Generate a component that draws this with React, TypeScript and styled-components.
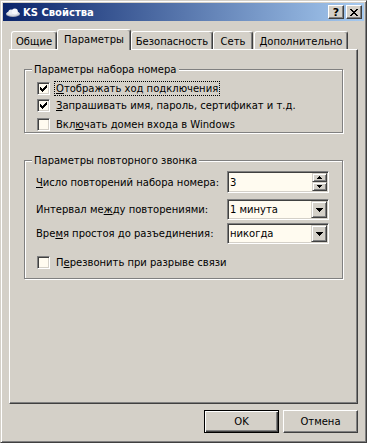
import React from 'react'
import styled, { createGlobalStyle } from 'styled-components'

const GlobalStyle = createGlobalStyle`
  html, body {
    margin: 0;
    padding: 0;
    background: #d4d0c8;
  }
  body {
    font-family: "DejaVu Sans", "Liberation Sans", sans-serif;
    font-size: 10px;
    line-height: 13px;
    color: #000;
  }
`

// small pixel drawings (check mark, arrows, close cross)
function Pixels({ rows, color = '#000' }: { rows: string[]; color?: string }) {
    const w = rows[0].length
    const h = rows.length
    const rects: React.ReactNode[] = []
    rows.forEach((row, y) => {
        row.split('').forEach((c, x) => {
            if (c === 'x') rects.push(<rect key={x + '-' + y} x={x} y={y} width={1} height={1} />)
        })
    })
    return (
        <svg width={w} height={h} viewBox={`0 0 ${w} ${h}`} shapeRendering='crispEdges' fill={color}>
            {rects}
        </svg>
    )
}

const CHECK = ['......x', '.....xx', 'x...xxx', 'xx.xxx.', 'xxxxx..', '.xxx...', '..x....']
const CROSS = ['xx....xx', '.xx..xx.', '..xxxx..', '...xx...', '..xxxx..', '.xx..xx.', 'xx....xx']
const DROP = ['xxxxxxx', '.xxxxx.', '..xxx..', '...x...']
const UP = ['..x..', '.xxx.', 'xxxxx']
const DOWN = ['xxxxx', '.xxx.', '..x..']

const Window = styled.div`
    box-sizing: border-box;
    width: 367px;
    height: 443px;
    padding: 2px;
    display: flex;
    flex-direction: column;
    background: #d4d0c8;
    border: 1px solid;
    border-color: #d4d0c8 #404040 #404040 #d4d0c8;
    box-shadow: inset 1px 1px 0 #fff, inset -1px -1px 0 #808080;
`

const TitleBar = styled.div`
    display: flex;
    align-items: center;
    height: 18px;
    padding: 0 2px;
    background: linear-gradient(to right, #0a246a, #a6caf0);
    color: #fff;
    font-weight: bold;
`

const TitleText = styled.span`
    flex: 1;
    margin-left: 2px;
    white-space: nowrap;
`

const TitleButton = styled.div<{ $gap?: number }>`
    box-sizing: border-box;
    width: 16px;
    height: 14px;
    margin-left: ${p => p.$gap ?? 0}px;
    display: flex;
    align-items: center;
    justify-content: center;
    background: #d4d0c8;
    border: 1px solid;
    border-color: #fff #404040 #404040 #fff;
    box-shadow: inset -1px -1px 0 #808080;
    color: #000;
    font-size: 11px;
    font-weight: bold;
`

const Body = styled.div`
    flex: 1;
    display: flex;
    flex-direction: column;
    padding: 8px 6px 0;
`

const TabStrip = styled.div`
    position: relative;
    z-index: 1;
    display: flex;
    align-items: flex-end;
    height: 20px;
    padding-left: 2px;
`

const Tab = styled.div<{ $active?: boolean; $w: number; $ml?: number }>`
    box-sizing: border-box;
    width: ${p => p.$w}px;
    height: ${p => (p.$active ? 21 : 18)}px;
    margin-bottom: ${p => (p.$active ? -1 : 0)}px;
    margin-left: ${p => p.$ml ?? 0}px;
    padding-top: 3px;
    text-align: center;
    white-space: nowrap;
    background: #d4d0c8;
    border: 1px solid;
    border-bottom: none;
    border-color: #fff #404040 #fff #fff;
    border-radius: 3px 3px 0 0;
    box-shadow: inset -1px 0 0 #808080;
`

const Panel = styled.div`
    box-sizing: border-box;
    height: 355px;
    padding: 0 14px;
    display: flex;
    flex-direction: column;
    border: 1px solid;
    border-color: #fff #404040 #404040 #fff;
    box-shadow: inset -1px -1px 0 #808080;
`

const Group = styled.div<{ $top: number; $h: number }>`
    position: relative;
    box-sizing: border-box;
    margin-top: ${p => p.$top}px;
    height: ${p => p.$h}px;
    padding-top: 10px;
    border: 1px solid #808080;
    box-shadow: inset 1px 1px 0 #fff, 1px 1px 0 #fff;
`

const Legend = styled.span`
    position: absolute;
    top: -7px;
    left: 7px;
    padding: 0 2px;
    background: #d4d0c8;
    white-space: nowrap;
`

const CheckRow = styled.div<{ $mt?: number }>`
    display: flex;
    align-items: center;
    height: 17px;
    margin-top: ${p => p.$mt ?? 0}px;
    padding-left: 12px;
`

const CheckBox = styled.div`
    box-sizing: border-box;
    width: 13px;
    height: 13px;
    flex: none;
    display: flex;
    align-items: center;
    justify-content: center;
    background: #fffbf0;
    border: 1px solid;
    border-color: #808080 #fff #fff #808080;
    box-shadow: inset 1px 1px 0 #404040, inset -1px -1px 0 #d4d0c8;
`

const CheckLabel = styled.span<{ $focus?: boolean }>`
    margin-left: 4px;
    padding: 0 1px;
    white-space: nowrap;
    border: 1px dotted ${p => (p.$focus ? '#000' : 'transparent')};
`

const FieldRow = styled.div<{ $mt?: number }>`
    display: flex;
    align-items: center;
    justify-content: space-between;
    margin-top: ${p => p.$mt ?? 0}px;
    padding: 0 13px 0 11px;
`

const Edit = styled.div<{ $h: number }>`
    box-sizing: border-box;
    width: 102px;
    height: ${p => p.$h}px;
    padding: 1px;
    display: flex;
    align-items: stretch;
    background: #fffbf0;
    border: 1px solid;
    border-color: #808080 #fff #fff #808080;
    box-shadow: inset 1px 1px 0 #404040, inset -1px -1px 0 #d4d0c8;
`

const EditText = styled.span`
    flex: 1;
    display: flex;
    align-items: center;
    padding-left: 1px;
    white-space: nowrap;
`

const SpinColumn = styled.div`
    display: flex;
    flex-direction: column;
    width: 15px;
`

const SmallButton = styled.div<{ $w: number; $h: number }>`
    box-sizing: border-box;
    width: ${p => p.$w}px;
    height: ${p => p.$h}px;
    display: flex;
    align-items: center;
    justify-content: center;
    background: #d4d0c8;
    border: 1px solid;
    border-color: #d4d0c8 #404040 #404040 #d4d0c8;
    box-shadow: inset 1px 1px 0 #fff, inset -1px -1px 0 #808080;
`

const Footer = styled.div`
    display: flex;
    justify-content: flex-end;
    gap: 4px;
    margin-top: 6px;
`

const PushButton = styled.button<{ $default?: boolean }>`
    box-sizing: border-box;
    width: 75px;
    height: 23px;
    padding: 0;
    font: inherit;
    color: #000;
    background: #d4d0c8;
    border: 1px solid;
    border-color: ${p => (p.$default ? '#000' : '#fff #404040 #404040 #fff')};
    box-shadow: ${p =>
        p.$default
            ? 'inset 1px 1px 0 #fff, inset -1px -1px 0 #404040, inset -2px -2px 0 #808080'
            : 'inset -1px -1px 0 #808080'};
`

function DialIcon() {
    return (
        <svg width='16' height='16' viewBox='0 0 16 16'>
            <ellipse cx='8' cy='10' rx='7' ry='3' fill='#a8acb8' />
            <ellipse cx='8' cy='9.5' rx='6.5' ry='2.5' fill='#d8dce4' />
            <circle cx='6' cy='8' r='2.6' fill='#e8ecf2' />
            <circle cx='9.8' cy='7.6' r='3' fill='#f6f8fb' />
        </svg>
    )
}

function Check({ checked, label, focus, mt }: { checked?: boolean; label: React.ReactNode; focus?: boolean; mt?: number }) {
    return (
        <CheckRow $mt={mt}>
            <CheckBox>{checked && <Pixels rows={CHECK} />}</CheckBox>
            <CheckLabel $focus={focus}>{label}</CheckLabel>
        </CheckRow>
    )
}

function Combo({ value }: { value: string }) {
    return (
        <Edit $h={21}>
            <EditText>{value}</EditText>
            <SmallButton $w={16} $h={17}>
                <Pixels rows={DROP} />
            </SmallButton>
        </Edit>
    )
}

export default function App() {
    return (
        <>
            <GlobalStyle />
            <Window>
                <TitleBar>
                    <DialIcon />
                    <TitleText>KS Свойства</TitleText>
                    <TitleButton>?</TitleButton>
                    <TitleButton $gap={2}>
                        <Pixels rows={CROSS} />
                    </TitleButton>
                </TitleBar>

                <Body>
                    <TabStrip>
                        <Tab $w={46}>Общие</Tab>
                        <Tab $w={74} $active>Параметры</Tab>
                        <Tab $w={82}>Безопасность</Tab>
                        <Tab $w={40}>Сеть</Tab>
                        <Tab $w={94} $ml={1}>Дополнительно</Tab>
                    </TabStrip>

                    <Panel>
                        <Group $top={19} $h={64}>
                            <Legend>Параметры набора номера</Legend>
                            <Check checked focus label={<><u>О</u>тображать ход подключения</>} />
                            <Check checked label={<><u>З</u>апрашивать имя, пароль, сертификат и т.д.</>} />
                            <Check mt={2} label={<>Вкл<u>ю</u>чать домен входа в Windows</>} />
                        </Group>

                        <Group $top={27} $h={119}>
                            <Legend>Параметры повторного звонка</Legend>
                            <FieldRow>
                                <span><u>Ч</u>исло повторений набора номера:</span>
                                <Edit $h={22}>
                                    <EditText>3</EditText>
                                    <SpinColumn>
                                        <SmallButton $w={15} $h={9}>
                                            <Pixels rows={UP} />
                                        </SmallButton>
                                        <SmallButton $w={15} $h={9}>
                                            <Pixels rows={DOWN} />
                                        </SmallButton>
                                    </SpinColumn>
                                </Edit>
                            </FieldRow>
                            <FieldRow $mt={6}>
                                <span>Интервал ме<u>ж</u>ду повторениями:</span>
                                <Combo value='1 минута' />
                            </FieldRow>
                            <FieldRow $mt={3}>
                                <span>Вре<u>м</u>я простоя до разъединения:</span>
                                <Combo value='никогда' />
                            </FieldRow>
                            <Check mt={10} label={<>П<u>е</u>резвонить при разрыве связи</>} />
                        </Group>
                    </Panel>

                    <Footer>
                        <PushButton $default>OK</PushButton>
                        <PushButton>Отмена</PushButton>
                    </Footer>
                </Body>
            </Window>
        </>
    )
}
